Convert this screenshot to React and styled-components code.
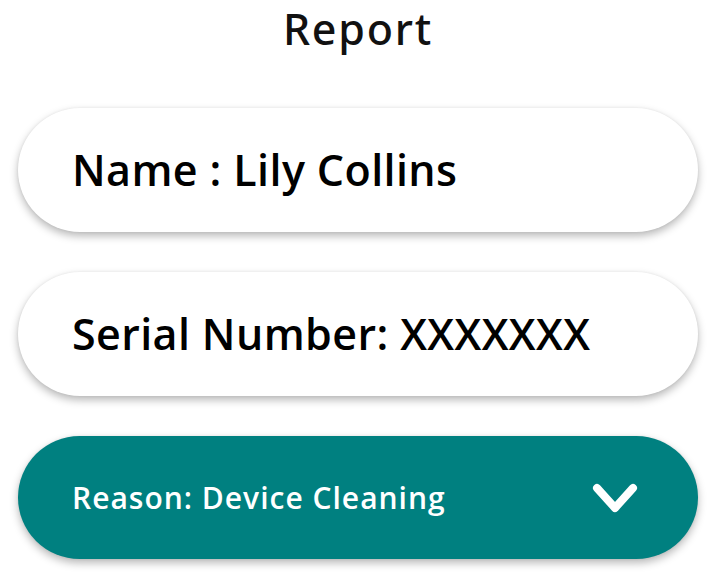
import React from "react";
import styled, { createGlobalStyle } from "styled-components";

const GlobalStyle = createGlobalStyle`
  body {
    margin: 0;
    background: #ffffff;
    font-family: "Open Sans", "Liberation Sans", sans-serif;
  }
`;

export default function App() {
  return (
    <>
      <GlobalStyle />
      <Page>
        <Title>Report</Title>
        <CardList>
          <InfoCard>
            <CardText>Name : Lily Collins</CardText>
          </InfoCard>
          <InfoCard>
            <CardText>Serial Number: XXXXXXX</CardText>
          </InfoCard>
          <SelectCard>
            <SelectText>Reason: Device Cleaning</SelectText>
            <Chevron viewBox="0 0 46 30">
              <path
                d="M5 5 L23 25 L41 5"
                fill="none"
                stroke="#ffffff"
                strokeWidth="8"
                strokeLinecap="round"
                strokeLinejoin="round"
              />
            </Chevron>
          </SelectCard>
        </CardList>
      </Page>
    </>
  );
}

const Page = styled.div`
  width: 716px;
  height: 582px;
  box-sizing: border-box;
  padding: 0 18px;
  display: flex;
  flex-direction: column;
  align-items: stretch;
`;

const Title = styled.h1`
  margin: 0 0 50px;
  text-align: center;
  font-family: "Noto Sans", "DejaVu Sans", sans-serif;
  font-size: 43px;
  font-weight: 500;
  line-height: 58px;
  color: #111111;
  letter-spacing: 1.8px;
`;

const CardList = styled.div`
  display: flex;
  flex-direction: column;
  gap: 40px;
`;

const InfoCard = styled.div`
  height: 124px;
  border-radius: 62px;
  background: #ffffff;
  box-shadow: 0 4px 8px rgba(0, 0, 0, 0.28), 0 0 3px rgba(0, 0, 0, 0.06);
  display: flex;
  align-items: center;
  padding: 0 54px;
`;

const CardText = styled.span`
  font-size: 43px;
  font-weight: 600;
  color: #000000;
  letter-spacing: 0.4px;
  margin-top: -2px;
`;

const SelectCard = styled(InfoCard)`
  background: #008080;
  justify-content: space-between;
  padding: 0 60px 0 54px;
  height: 123px;
`;

const SelectText = styled.span`
  font-size: 30px;
  font-weight: 600;
  color: #ffffff;
  letter-spacing: 1px;
`;

const Chevron = styled.svg`
  width: 46px;
  height: 30px;
`;
